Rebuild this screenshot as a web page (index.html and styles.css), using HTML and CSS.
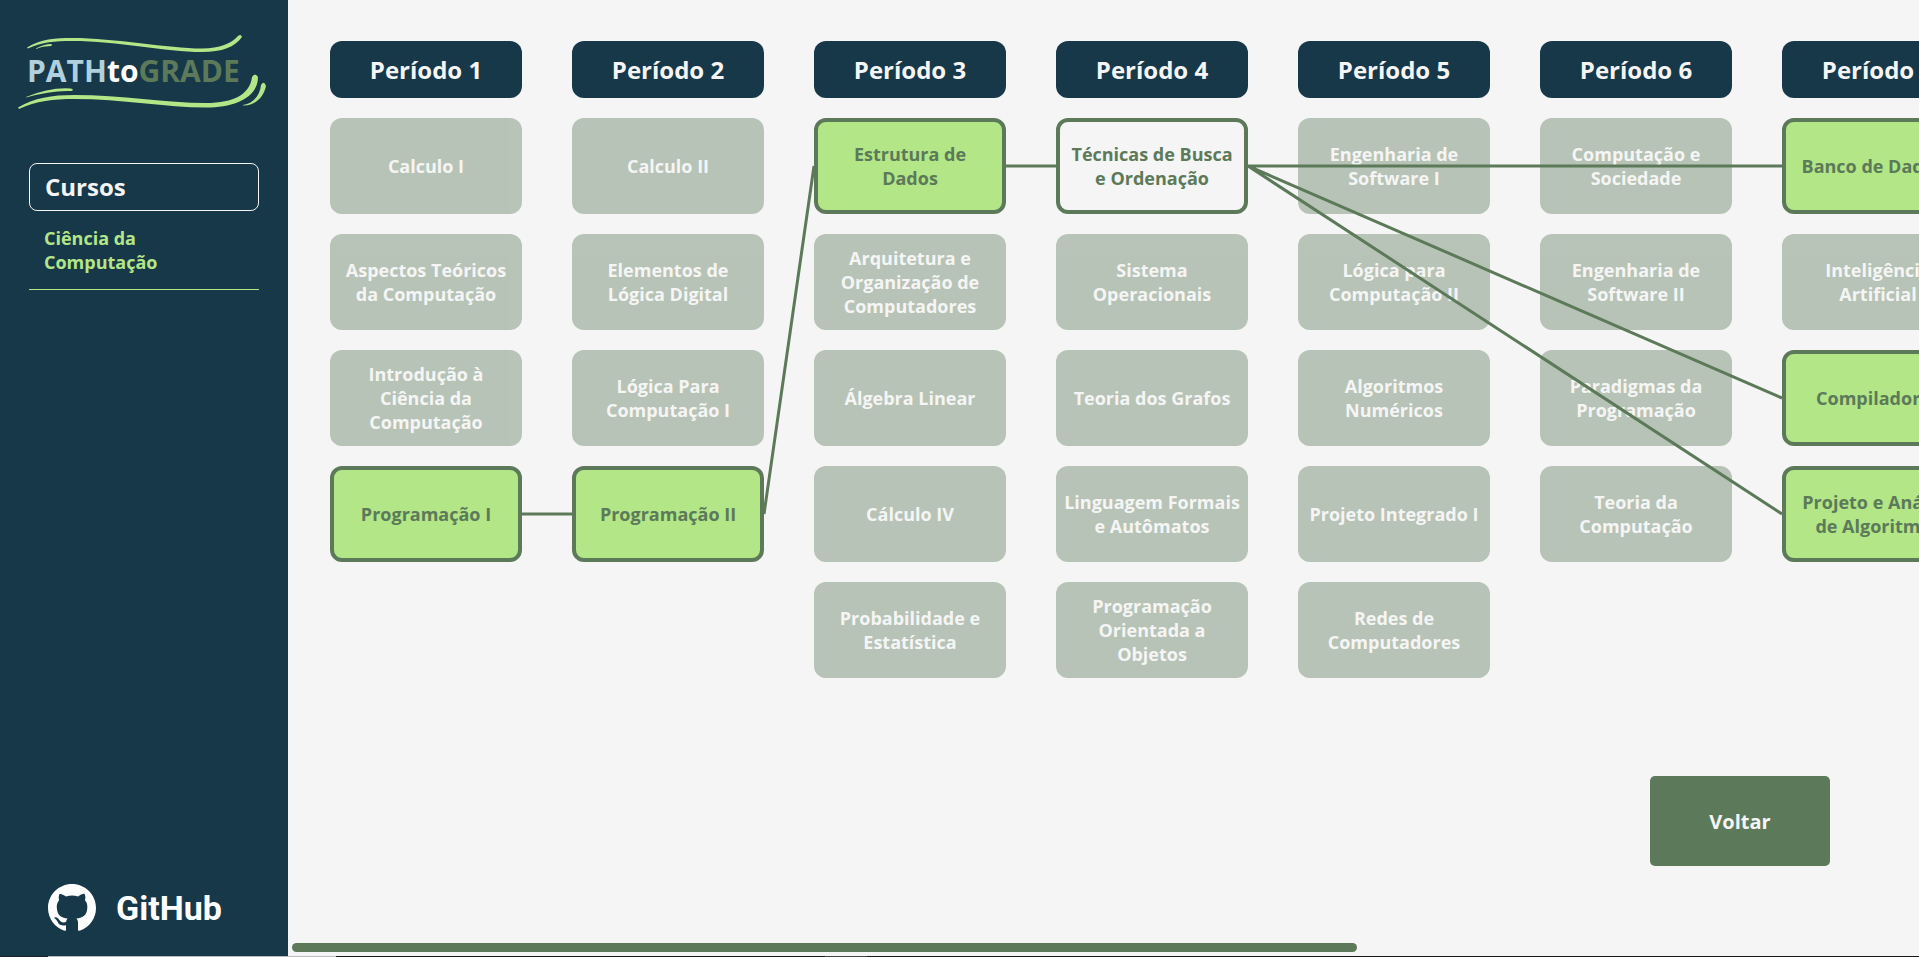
FILE: index.html
```html
<!DOCTYPE html>
<html lang="pt-BR">
<head>
<meta charset="utf-8">
<title>PATHtoGRADE</title>
<link rel="stylesheet" href="styles.css">
</head>
<body>
<div class="app">
  <aside class="sidebar">
    <svg class="logo" viewBox="0 0 260 90" role="img" aria-label="PATHtoGRADE">
      <path class="swoosh" d="M17 17.500C30 9 46 8 62 8C105 8 158 18.500 192 18.500C210 18 221 14 228 6Q231 3.500 232 7C225 17 212 22 192 22C155 22 108 11 62 11C44 11 33 12 18 18.500Z"/>
      <path class="swoosh" d="M25 19Q34 14 41 14Q43 15 41 16Q33 16 25 19Z"/>
      <path class="swoosh" d="M16 67Q40 57 61 58.500Q65 60 61 61Q42 60 16 67.500Z"/>
      <path class="swoosh" d="M8 77.500C24 68 42 65 64 65C112 65 156 73 196 73C224 73 240 64 242 47Q245 42 248 47C248 67 226 77.500 196 77.500C156 77.500 112 69 64 69C44 69 26 71 9 79Z"/>
      <path class="swoosh" d="M233 75C244 73 250 65 251 55Q254 50 256 56C254 66 246 76 233 75.500Z"/>
      <text class="logo-text" x="17" y="52"><tspan class="logo-path">PATH</tspan><tspan class="logo-to">to</tspan><tspan class="logo-grade">GRADE</tspan></text>
    </svg>
    <nav class="courses">
      <h2 class="courses-title">Cursos</h2>
      <a class="course-link" href="#">Ciência da Computação</a>
    </nav>
    <a class="github" href="#">
      <svg class="github-mark" viewBox="0 0 16 16" aria-hidden="true"><path d="M8 0C3.58 0 0 3.58 0 8c0 3.54 2.290 6.530 5.470 7.590.4.070.550-.170.550-.380 0-.190-.010-.820-.010-1.490-2.010.370-2.530-.490-2.690-.940-.090-.230-.480-.940-.820-1.130-.280-.150-.680-.520-.010-.530.630-.010 1.080.580 1.230.820.720 1.210 1.870.870 2.330.660.070-.520.280-.870.510-1.070-1.780-.2-3.640-.890-3.640-3.950 0-.870.310-1.590.820-2.150-.080-.2-.360-1.020.080-2.120 0 0 .670-.210 2.200.820.640-.180 1.320-.270 2-.270s1.360.090 2 .270c1.530-1.040 2.200-.820 2.200-.820.440 1.100.160 1.920.080 2.120.510.560.820 1.270.820 2.150 0 3.070-1.870 3.750-3.650 3.950.290.250.540.730.540 1.480 0 1.070-.010 1.930-.010 2.200 0 .210.150.460.550.380A8.010 8.010 0 0 0 16 8c0-4.420-3.580-8-8-8Z"/></svg>
      <span>GitHub</span>
    </a>
  </aside>
  <main class="main">
    <div class="scroller">
      <div class="board">
        <section class="period"><h2 class="period-title">Período 1</h2>
          <button class="card off">Calculo I</button>
          <button class="card off">Aspectos Teóricos da Computação</button>
          <button class="card off">Introdução à Ciência da Computação</button>
          <button class="card on">Programação I</button></section>
        <section class="period"><h2 class="period-title">Período 2</h2>
          <button class="card off">Calculo II</button>
          <button class="card off">Elementos de Lógica Digital</button>
          <button class="card off">Lógica Para Computação I</button>
          <button class="card on">Programação II</button></section>
        <section class="period"><h2 class="period-title">Período 3</h2>
          <button class="card on">Estrutura de Dados</button>
          <button class="card off">Arquitetura e Organização de Computadores</button>
          <button class="card off">Álgebra Linear</button>
          <button class="card off">Cálculo IV</button>
          <button class="card off">Probabilidade e Estatística</button></section>
        <section class="period"><h2 class="period-title">Período 4</h2>
          <button class="card selected">Técnicas de Busca e Ordenação</button>
          <button class="card off">Sistema Operacionais</button>
          <button class="card off">Teoria dos Grafos</button>
          <button class="card off">Linguagem Formais e Autômatos</button>
          <button class="card off">Programação Orientada a Objetos</button></section>
        <section class="period"><h2 class="period-title">Período 5</h2>
          <button class="card off">Engenharia de Software I</button>
          <button class="card off">Lógica para Computação II</button>
          <button class="card off">Algoritmos Numéricos</button>
          <button class="card off">Projeto Integrado I</button>
          <button class="card off">Redes de Computadores</button></section>
        <section class="period"><h2 class="period-title">Período 6</h2>
          <button class="card off">Computação e Sociedade</button>
          <button class="card off">Engenharia de Software II</button>
          <button class="card off">Paradigmas da Programação</button>
          <button class="card off">Teoria da Computação</button></section>
        <section class="period"><h2 class="period-title">Período 7</h2>
          <button class="card on">Banco de Dados I</button>
          <button class="card off">Inteligência Artificial</button>
          <button class="card on">Compiladores</button>
          <button class="card on">Projeto e Análise de Algoritmos</button></section>
        <svg class="links" viewBox="0 0 1644 636" aria-hidden="true">
          <path d="M192 473H242M434 473L484 125M676 125H726M918 125H1452M918 125L1452 357M918 125L1452 473"/>
        </svg>
      </div>
    </div>
    <div class="actions"><button class="back">Voltar</button></div>
    <div class="scrollbar"><div class="thumb"></div></div>
  </main>
</div>
<div class="edge"></div>
</body>
</html>
```

FILE: styles.css
```css
* { box-sizing: border-box; }
body {
  margin: 0;
  height: 100vh;
  display: flex;
  flex-direction: column;
  overflow: hidden;
  background: #f5f5f5;
  color: #f5f5f5;
  font-family: "Open Sans", "Noto Sans", sans-serif;
}
button { font: inherit; cursor: pointer; }
a { text-decoration: none; }
h2 { margin: 0; }

.app { flex: 1; min-height: 0; display: flex; }

.sidebar {
  width: 288px;
  flex: none;
  display: flex;
  flex-direction: column;
  background: #173849;
}
.logo { width: 260px; height: 90px; margin: 30px 0 0 10px; }
.swoosh { fill: #b2e686; }
.logo-text { font-size: 30px; font-weight: 700; }
.logo-path { fill: #b0d0de; }
.logo-to { fill: #fff; }
.logo-grade { fill: #5c7a59; }

.courses { flex: 1; margin: 43px 29px 0; }
.courses-title {
  height: 48px;
  padding-left: 15px;
  border: 1px solid #f5f5f5;
  border-radius: 8px;
  font-size: 24px;
  line-height: 46px;
}
.course-link {
  display: block;
  padding: 15px 60px 15px 15px;
  border-bottom: 1px solid #b2e686;
  color: #b2e686;
  font-size: 18px;
  font-weight: 700;
  line-height: 24px;
}
.github {
  display: flex;
  align-items: center;
  gap: 20px;
  padding: 0 0 24px 48px;
  color: #fff;
  font-family: Roboto, "Open Sans", sans-serif;
  font-size: 34px;
  font-weight: 700;
  line-height: 48px;
}
.github-mark { width: 48px; height: 48px; fill: #fff; }

.main { flex: 1; min-width: 0; display: flex; flex-direction: column; }
.scroller { flex: 1; min-height: 0; overflow: auto hidden; scrollbar-width: none; padding: 41px 42px 0; }
.board { position: relative; display: flex; gap: 50px; width: max-content; }
.period { width: 192px; display: flex; flex-direction: column; gap: 20px; }
.period-title {
  height: 57px;
  border-radius: 12px;
  background: #173849;
  font-size: 24px;
  line-height: 57px;
  text-align: center;
}
.card {
  height: 96px;
  padding: 0 8px;
  border: 4px solid #5c7a59;
  border-radius: 12px;
  font-size: 18px;
  font-weight: 700;
  line-height: 24px;
}
.on { background: #b2e686; color: #5c7a59; }
.selected { background: #f5f5f5; color: #5c7a59; }
.off { border: 0; background: #5c7a59; color: #f5f5f5; opacity: 0.4; }
.links { position: absolute; top: 0; left: 0; width: 1644px; height: 636px; pointer-events: none; }
.links path { fill: none; stroke: #5c7a59; stroke-width: 3; }

.actions { display: flex; justify-content: flex-end; padding-right: 89px; }
.back {
  width: 180px;
  height: 90px;
  border: 0;
  border-radius: 5px;
  background: #5c7a59;
  color: #f5f5f5;
  font-size: 20px;
  font-weight: 700;
}
.scrollbar { margin-top: 77px; padding: 0 4px 4px; }
.thumb { width: 65.6%; height: 9px; border-radius: 5px; background: #5c7a59; }
.edge {
  height: 1px;
  background: linear-gradient(90deg, #20202c 48px, #b8bcbc 48px 336px, #181818 336px 825px, #444 825px 867px, #181818 867px);
}
```
